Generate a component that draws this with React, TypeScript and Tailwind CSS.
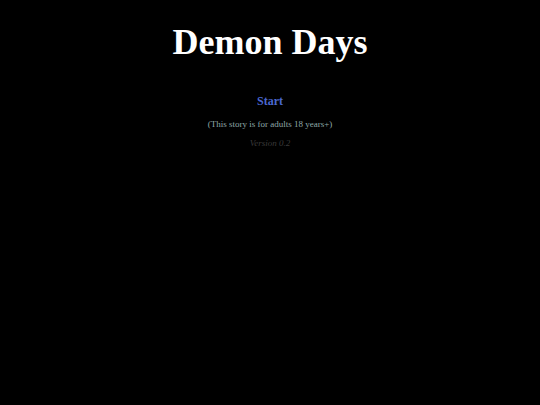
export default function App() {
  return (
    <div className="min-h-[405px] w-full bg-black text-center font-['Liberation_Serif',Georgia,serif]">
      <h1 className="pt-[22px] text-[36px] font-bold leading-[40px] text-white">Demon Days</h1>
      <div className="mt-[32px] text-[12px] font-bold leading-[14px] text-[#4b68d0]">Start</div>
      <p className="mt-[10px] text-[9px] leading-[12px] text-[#8fa8a8]">(This story is for adults 18 years+)</p>
      <p className="mt-[7px] text-[9px] italic leading-[12px] text-[#3a3a3a]">Version 0.2</p>
    </div>
  );
}
